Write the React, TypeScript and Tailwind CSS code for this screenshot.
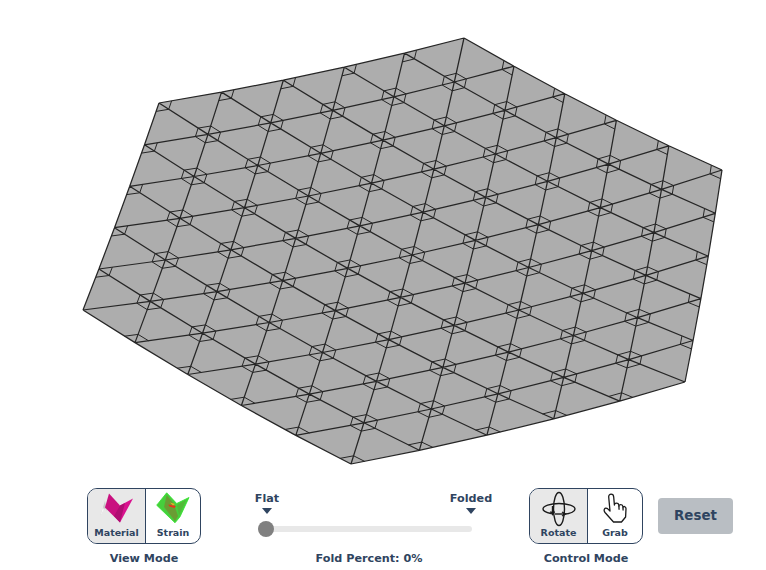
const DIRS = [
  [1, 0],
  [1, 1],
  [0, 1],
  [-1, 0],
  [-1, -1],
  [0, -1],
];
const HUB = 0.2;

const inSheet = (i: number, j: number) =>
  i >= -1 && i <= 9 && j >= -1 && j <= 9 && Math.abs(i - j) <= 5;

// lattice coords to screen, the sheet is slightly bowed so it is not a plain affine map
function place(i: number, j: number) {
  const s = i - 4;
  const t = j - 4;
  const x = 412 + 63.9 * s - 11.3 * t - 0.38 * s * s + 0.96 * s * t - 0.18 * t * t;
  const y =
    255 - 14 * s + 42.6 * t - 0.6 * s * s + 0.26 * s * t - 0.16 * t * t - 0.014 * (s * s * t + s * t * t);
  return [x, y];
}

// which hub side is left out on each border of the sheet
function dropped(i: number, j: number, k: number) {
  if (j === -1 && k === 2) return true;
  if (i - j === 5 && k === 1) return true;
  if (i === 9 && k === 4) return true;
  if (j === 9 && k === 3) return true;
  if (j - i === 5 && k === 0) return true;
  if (i === -1 && k === 5) return true;
  return false;
}

function buildSheet() {
  const creases: string[] = [];
  const hubs: string[] = [];
  for (let i = -1; i <= 9; i++) {
    for (let j = -1; j <= 9; j++) {
      if (!inSheet(i, j)) continue;
      const [x, y] = place(i, j);
      for (let k = 0; k < 3; k++) {
        const [di, dj] = DIRS[k];
        if (!inSheet(i + di, j + dj)) continue;
        const [x2, y2] = place(i + di, j + dj);
        creases.push(`M${x.toFixed(1)} ${y.toFixed(1)}L${x2.toFixed(1)} ${y2.toFixed(1)}`);
      }
      for (let k = 0; k < 6; k++) {
        const d1 = DIRS[k];
        const d2 = DIRS[(k + 1) % 6];
        if (!inSheet(i + d1[0], j + d1[1]) || !inSheet(i + d2[0], j + d2[1])) continue;
        if (dropped(i, j, k)) continue;
        const [ax, ay] = place(i + d1[0] * HUB, j + d1[1] * HUB);
        const [bx, by] = place(i + d2[0] * HUB, j + d2[1] * HUB);
        hubs.push(`M${ax.toFixed(1)} ${ay.toFixed(1)}L${bx.toFixed(1)} ${by.toFixed(1)}`);
      }
    }
  }
  // walk the border one lattice step at a time so the fill follows the bowed edges
  const border: number[][] = [];
  let p = [-1, -1];
  [0, 1, 2, 3, 4, 5].forEach((k) => {
    for (let n = 0; n < 5; n++) {
      border.push(place(p[0], p[1]));
      p = [p[0] + DIRS[k][0], p[1] + DIRS[k][1]];
    }
  });
  const outline = border.map((q) => q.map((n) => n.toFixed(1)).join(",")).join(" ");
  return { creases: creases.join(""), hubs: hubs.join(""), outline };
}

const sheet = buildSheet();

function Sheet() {
  return (
    <svg width="766" height="488" viewBox="0 0 766 488" className="block shrink-0">
      <polygon points={sheet.outline} fill="#adadad" />
      <path d={sheet.hubs} fill="none" stroke="#262626" strokeWidth="1" />
      <path d={sheet.creases} fill="none" stroke="#262626" strokeWidth="1.25" />
    </svg>
  );
}

function MaterialThumb() {
  return (
    <svg width="38" height="34" viewBox="0 0 38 34" className="blur-[0.4px]">
      <polygon points="7,10 2,25.5 7,17 9,20" fill="#c6c6c6" />
      <polygon points="5,16 2,25.5 6,19" fill="#f6f6f6" />
      <polygon points="11,2.5 22,14.5 22,31.5 7,16.5" fill="#c9107f" />
      <polygon points="22,14.5 35,7.5 22,31.5" fill="#d9128e" />
      <polygon points="22,14.5 27,12 22,31.5 16,25" fill="#b00d72" />
    </svg>
  );
}

function StrainThumb() {
  return (
    <svg width="38" height="36" viewBox="0 0 38 36" className="blur-[0.4px]">
      <polygon
        points="12.7,2.8 22.7,13.5 35,7.5 26,26.8 21,32.8 2.7,15.2"
        fill="#46cf3c"
        stroke="#30e32a"
        strokeWidth="0.8"
      />
      <polygon points="12.7,5 20,14 24,26 21,31 10,17" fill="#6a9c34" />
      <polygon points="23,15 32,10 25,25" fill="#53b838" />
      <polygon points="14,14.5 22,16 20.5,18 15.5,16.5" fill="#e8341c" />
      <polygon points="16,12.5 21,14 19,15.5" fill="#e6b422" />
    </svg>
  );
}

function RotateIcon() {
  return (
    <svg width="36" height="38" viewBox="0 0 36 38" fill="none" stroke="#1a1a1a" strokeWidth="1.4" className="blur-[0.2px]">
      <ellipse cx="18" cy="20" rx="5.5" ry="16.5" />
      <path d="M10 24.5C5 23.5 2 22 2 20c0-3 7-5.5 16-5.5s16 2.5 16 5.5c0 2.5-5 4.6-12 5.3" />
      <path d="M11.5 17v7.5" />
      <path d="M9.5 22.5l2 3 2-3" />
      <path d="M14 25h9" />
      <path d="M21 23l3.5 2-3.5 2" />
    </svg>
  );
}

function GrabIcon() {
  return (
    <svg width="26" height="33" viewBox="0 0 26 33" fill="#fff" stroke="#1a1a1a" strokeWidth="1.3" strokeLinejoin="round" className="blur-[0.2px]">
      <path d="M11.5 30L3 20.5C1 18 3 14.8 5.5 16.6L8 19L6.7 5C6.5 1.2 11.5 1.2 11.7 5L12.4 13c0-2.6 4.1-2.6 4.3-.1l.2 1.5c0-2.3 3.8-2.3 4 .2l.1 1c.2-1.7 3-1.4 3 1L23.6 25L19.5 30Z" />
      <path d="M16.9 14.4l.2 3.4M21 15.6l.1 3" fill="none" />
    </svg>
  );
}

function ModeBox({ left, right, label }: any) {
  return (
    <div className="flex flex-col items-center w-[114px]">
      <div className="flex w-[114px] h-[56px] border-[1.5px] border-[#2f4460] rounded-[10px] overflow-hidden">
        <div className="flex flex-col items-center w-[58px] h-full bg-[#e8e8e8] border-r-[1.5px] border-[#2f4460]">
          <div className="flex items-center justify-center h-[38px] w-full">{left.icon}</div>
          <span className="text-[9.5px] leading-[12px] font-bold text-[#2f4460]">{left.text}</span>
        </div>
        <div className="flex flex-col items-center flex-1 h-full">
          <div className="flex items-center justify-center h-[38px] w-full">{right.icon}</div>
          <span className="text-[9.5px] leading-[12px] font-bold text-[#2f4460]">{right.text}</span>
        </div>
      </div>
      <span className="mt-[7px] h-[16px] text-[11.2px] leading-[16px] font-bold text-[#2f4460] whitespace-nowrap">{label}</span>
    </div>
  );
}

function FoldSlider() {
  return (
    <div className="flex flex-col w-[244px] ml-[46px]">
      <div className="flex justify-between mt-[3px]">
        <div className="flex flex-col items-center w-[40px]">
          <span className="h-[16px] text-[11.2px] leading-[16px] font-bold text-[#2f4460]">Flat</span>
          <div className="mt-[1px] w-0 h-0 border-x-[5px] border-x-transparent border-t-[6px] border-t-[#2f4460]" />
        </div>
        <div className="flex flex-col items-center w-[40px]">
          <span className="h-[16px] text-[11.2px] leading-[16px] font-bold text-[#2f4460]">Folded</span>
          <div className="mt-[1px] w-0 h-0 border-x-[5px] border-x-transparent border-t-[6px] border-t-[#2f4460]" />
        </div>
      </div>
      <div className="relative mt-[12px] ml-[11px] w-[214px] h-[6px] rounded-full bg-[#e8e8e8]">
        <div className="absolute left-[-0.5px] top-[-5px] w-[16px] h-[16px] rounded-full bg-[#808080]" />
      </div>
      <span className="mt-[19px] h-[16px] text-center text-[11.2px] leading-[16px] font-bold text-[#2f4460]">Fold Percent: 0%</span>
    </div>
  );
}

export default function App() {
  return (
    <div className="flex flex-col w-[766px] h-[570px] bg-white overflow-hidden font-['DejaVu_Sans',sans-serif]">
      <Sheet />
      <div className="flex items-start pl-[87px]">
        <ModeBox
          label="View Mode"
          left={{ icon: <MaterialThumb />, text: "Material" }}
          right={{ icon: <StrainThumb />, text: "Strain" }}
        />
        <FoldSlider />
        <div className="ml-[38px]">
          <ModeBox
            label="Control Mode"
            left={{ icon: <RotateIcon />, text: "Rotate" }}
            right={{ icon: <GrabIcon />, text: "Grab" }}
          />
        </div>
        <button className="ml-[15px] mt-[10px] w-[75px] h-[36px] pt-[1px] rounded-[4px] bg-[#b9bec3] text-[13.4px] font-bold text-[#2f4460]">
          Reset
        </button>
      </div>
    </div>
  );
}
